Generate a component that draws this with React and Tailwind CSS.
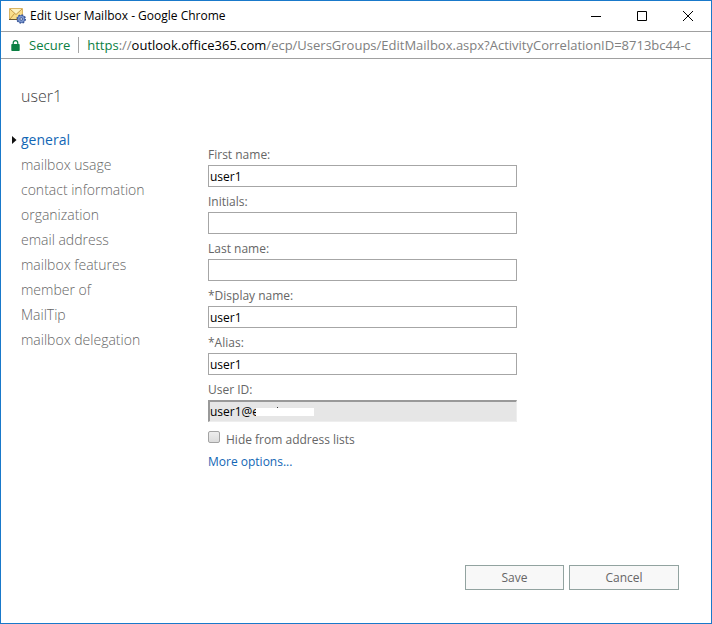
import React, { useState } from 'react';

const sections = [
  'general',
  'mailbox usage',
  'contact information',
  'organization',
  'email address',
  'mailbox features',
  'member of',
  'MailTip',
  'mailbox delegation',
];

const fields = [
  { id: 'firstName', label: 'First name:' },
  { id: 'initials', label: 'Initials:' },
  { id: 'lastName', label: 'Last name:' },
  { id: 'displayName', label: '*Display name:' },
  { id: 'alias', label: '*Alias:' },
];

function MailboxIcon() {
  return (
    <svg width="17" height="16" viewBox="0 0 17 16" className="shrink-0" aria-hidden="true">
      <path d="M0.5 0.5h13v11h-13z" fill="#f9dd8a" stroke="#d9b564" />
      <path d="M1 1l6 5.5L13 1z" fill="#fdf3c4" />
      <path d="M1 1l6 5.5L13 1M1 11l4.5-5.5" fill="none" stroke="#c0923e" strokeWidth="0.9" />
      <path d="M0 11.5h9" stroke="#6b5a36" />
      <circle cx="12.2" cy="11" r="4" fill="#5b78b8" stroke="#3a5797" strokeWidth="1.6" strokeDasharray="1.7 1.4" />
      <circle cx="12.2" cy="11" r="3" fill="#7f9bd2" />
      <circle cx="12.2" cy="11" r="1.3" fill="#f4f7fd" stroke="#34508f" strokeWidth="0.9" />
    </svg>
  );
}

function LockIcon() {
  return (
    <svg width="9" height="11" viewBox="0 0 9 11" className="shrink-0" aria-hidden="true">
      <path d="M2.2 5V2.9a2.3 2.3 0 0 1 4.6 0V5" fill="none" stroke="#0b8043" strokeWidth="1.2" />
      <rect x="0.3" y="4" width="8.4" height="7" rx="0.8" fill="#0b8043" />
    </svg>
  );
}

function TitleBar() {
  return (
    <header className="flex h-[31px] items-center border-b border-[#a0a0a0] pl-2">
      <MailboxIcon />
      <h1 className="ml-1 flex-1 truncate text-[12px] leading-5 text-black">Edit User Mailbox - Google Chrome</h1>
      <div className="flex h-full">
        <button type="button" aria-label="Minimize" className="flex w-[46px] items-center justify-center">
          <svg width="10" height="10" viewBox="0 0 10 10"><path d="M0 5.5h10" stroke="#000" /></svg>
        </button>
        <button type="button" aria-label="Maximize" className="flex w-[46px] items-center justify-center">
          <svg width="10" height="10" viewBox="0 0 10 10"><path d="M0.5 0.5h9v9h-9z" fill="none" stroke="#000" /></svg>
        </button>
        <button type="button" aria-label="Close" className="flex w-[46px] items-center justify-center">
          <svg width="10" height="10" viewBox="0 0 10 10"><path d="M0 0l10 10M10 0l-10 10" stroke="#000" /></svg>
        </button>
      </div>
    </header>
  );
}

function AddressBar() {
  return (
    <div className="flex h-[27px] items-center border-b border-[#a0a0a0] pr-[5px] pl-[10px] text-[13px] leading-5">
      <LockIcon />
      <span className="ml-[9px] text-[#0b8043]">Secure</span>
      <span className="mx-2 h-4 w-px shrink-0 bg-[#a6a6a6]" />
      <p className="min-w-0 flex-1 overflow-hidden whitespace-nowrap text-[#808080]">
        <span className="text-[#0b8043]">https</span>://<span className="text-black">outlook.office365.com</span>
        /ecp/UsersGroups/EditMailbox.aspx?ActivityCorrelationID=8713bc44-c
      </p>
    </div>
  );
}

export default function App() {
  const [active, setActive] = useState('general');
  const [hidden, setHidden] = useState(false);
  const [values, setValues] = useState({
    firstName: 'user1',
    initials: '',
    lastName: '',
    displayName: 'user1',
    alias: 'user1',
  });

  return (
    <div className="flex min-h-screen flex-col border border-[#1979ca] bg-white font-['Open_Sans','Noto_Sans',sans-serif]">
      <TitleBar />
      <AddressBar />

      <main className="flex flex-1 flex-col pt-[25px]">
        <h2 className="pl-5 text-[16px] leading-6 font-light text-[#444444]">user1</h2>

        <div className="flex pt-[19px]">
          <nav className="w-[207px] shrink-0 pl-[11px]">
            <ul>
              {sections.map((name) => (
                <li key={name}>
                  <a
                    href={`#${name.replace(' ', '-')}`}
                    onClick={() => setActive(name)}
                    className={`flex items-center text-[14px] leading-[25px] ${
                      name === active ? 'text-[#1266b5]' : 'font-light text-[#666666]'
                    }`}
                  >
                    <span className="w-[9px]">
                      {name === active && (
                        <svg width="5" height="8" viewBox="0 0 5 8"><path d="M0 0l4.5 4-4.5 4z" fill="#111" /></svg>
                      )}
                    </span>
                    {name}
                  </a>
                </li>
              ))}
            </ul>
          </nav>

          <form className="flex w-full max-w-[309px] flex-col pt-[18px] text-[12px] leading-5 text-[#666666]">
            <div className="flex flex-col gap-[5px]">
              {fields.map(({ id, label }) => (
                <div key={id} className="flex flex-col">
                  <label htmlFor={id}>{label}</label>
                  <input
                    id={id}
                    type="text"
                    value={values[id]}
                    onChange={(e) => setValues((v) => ({ ...v, [id]: e.target.value }))}
                    className="h-[22px] border border-[#a6a6a6] px-px text-black outline-none"
                  />
                </div>
              ))}

              <div className="flex flex-col">
                <label htmlFor="userId">User ID:</label>
                <div className="relative flex">
                  <input
                    id="userId"
                    type="text"
                    readOnly
                    value="user1@e"
                    className="h-[22px] w-full border-t-2 border-r border-b border-l-2 border-t-[#999999] border-r-[#eeeeee] border-b-[#eeeeee] border-l-[#999999] bg-[#e6e6e6] text-black outline-none"
                  />
                  <span className="absolute top-2 left-12 h-2 w-[58px] bg-white" />
                  <span className="absolute top-[7px] left-[69px] h-px w-px bg-[#333333]" />
                </div>
              </div>
            </div>

            <div className="flex pt-2">
              <input
                id="hideFromLists"
                type="checkbox"
                checked={hidden}
                onChange={(e) => setHidden(e.target.checked)}
                className="mt-px mr-[6px] h-3 w-3 appearance-none rounded-[2px] border border-[#a3a3a3] bg-gradient-to-b from-[#eeeeee] to-[#dcdcdc] checked:from-[#0072c6] checked:to-[#0072c6]"
              />
              <label htmlFor="hideFromLists">Hide from address lists</label>
            </div>
            <a href="#more-options" className="self-start pt-[2px] text-[#1266b5]">More options...</a>
          </form>
        </div>

        <footer className="mt-auto flex justify-end gap-[5px] pr-8 pb-[33px] text-[12px] text-[#666666]">
          <button type="button" className="h-[25px] w-[99px] border border-[#92a3a0] bg-[#f8f8f8]">Save</button>
          <button type="button" className="h-[25px] w-[110px] border border-[#92a3a0] bg-[#f8f8f8]">Cancel</button>
        </footer>
      </main>
    </div>
  );
}
